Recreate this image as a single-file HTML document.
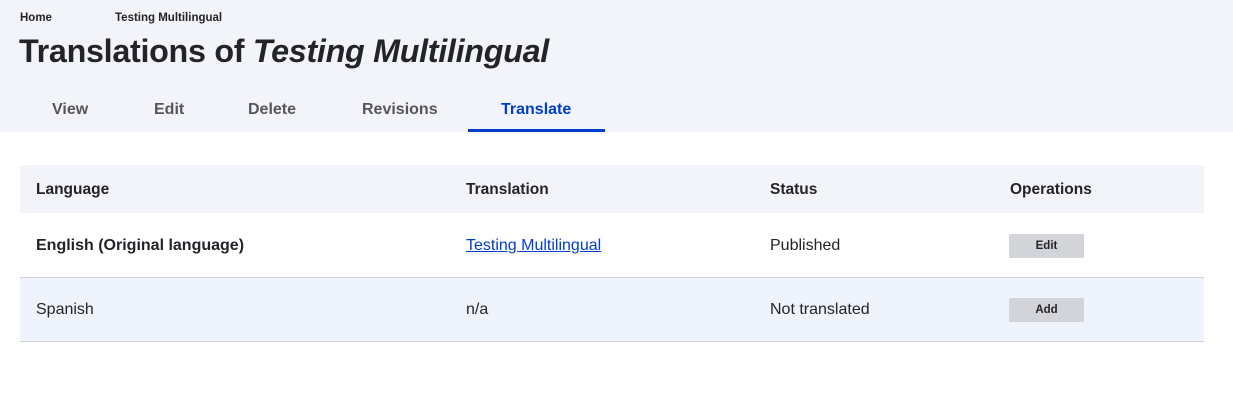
<!DOCTYPE html>
<html><head><style>
body{margin:0;width:1233px;height:404px;background:#fff;font-family:"Liberation Sans",sans-serif;color:#232429;position:relative;overflow:hidden}
.a{position:absolute;white-space:nowrap}
.hdr{position:absolute;left:0;top:0;width:1233px;height:132px;background:#f3f4f9}
.tab{position:absolute;top:101px;font-size:16px;font-weight:bold;color:#55565b}
.btn{position:absolute;left:1009px;width:75px;height:24px;background:#d3d4d9;border-radius:2px;font-size:11.5px;font-weight:bold;text-align:center;line-height:24px;color:#232429}
.th{font-size:15.5px;font-weight:bold;top:181px}
.td{font-size:16px}
</style></head><body>
<div class="hdr"></div>
<div class="a" style="left:20px;top:12px;font-size:11.5px;font-weight:bold">Home</div>
<div class="a" style="left:115px;top:12px;font-size:11.5px;font-weight:bold">Testing Multilingual</div>
<div class="a" style="left:19px;top:33px;font-size:32.3px;font-weight:bold;letter-spacing:-0.3px">Translations of <i>Testing Multilingual</i></div>
<div class="tab" style="left:52px">View</div>
<div class="tab" style="left:154px">Edit</div>
<div class="tab" style="left:248px">Delete</div>
<div class="tab" style="left:362px">Revisions</div>
<div class="tab" style="left:501px;color:#003ecc">Translate</div>
<div class="a" style="left:468px;top:129px;width:137px;height:3px;background:#003ecc"></div>

<div class="a" style="left:20px;top:165px;width:1184px;height:48px;background:#f3f4f9"></div>
<div class="a" style="left:20px;top:277px;width:1184px;height:1px;background:#d3d4d9"></div>
<div class="a" style="left:20px;top:278px;width:1184px;height:63px;background:#eff3fc"></div>
<div class="a" style="left:20px;top:341px;width:1184px;height:1px;background:#d3d4d9"></div>

<div class="a th" style="left:36px">Language</div>
<div class="a th" style="left:466px">Translation</div>
<div class="a th" style="left:770px">Status</div>
<div class="a th" style="left:1010px">Operations</div>

<div class="a td" style="left:36px;top:237px;font-weight:bold">English (Original language)</div>
<div class="a td" style="left:466px;top:237px;color:#003ecc;text-decoration:underline">Testing Multilingual</div>
<div class="a td" style="left:770px;top:237px">Published</div>
<div class="btn" style="top:234px">Edit</div>

<div class="a td" style="left:36px;top:301px">Spanish</div>
<div class="a td" style="left:466px;top:301px">n/a</div>
<div class="a td" style="left:770px;top:301px">Not translated</div>
<div class="btn" style="top:298px">Add</div>
</body></html>
